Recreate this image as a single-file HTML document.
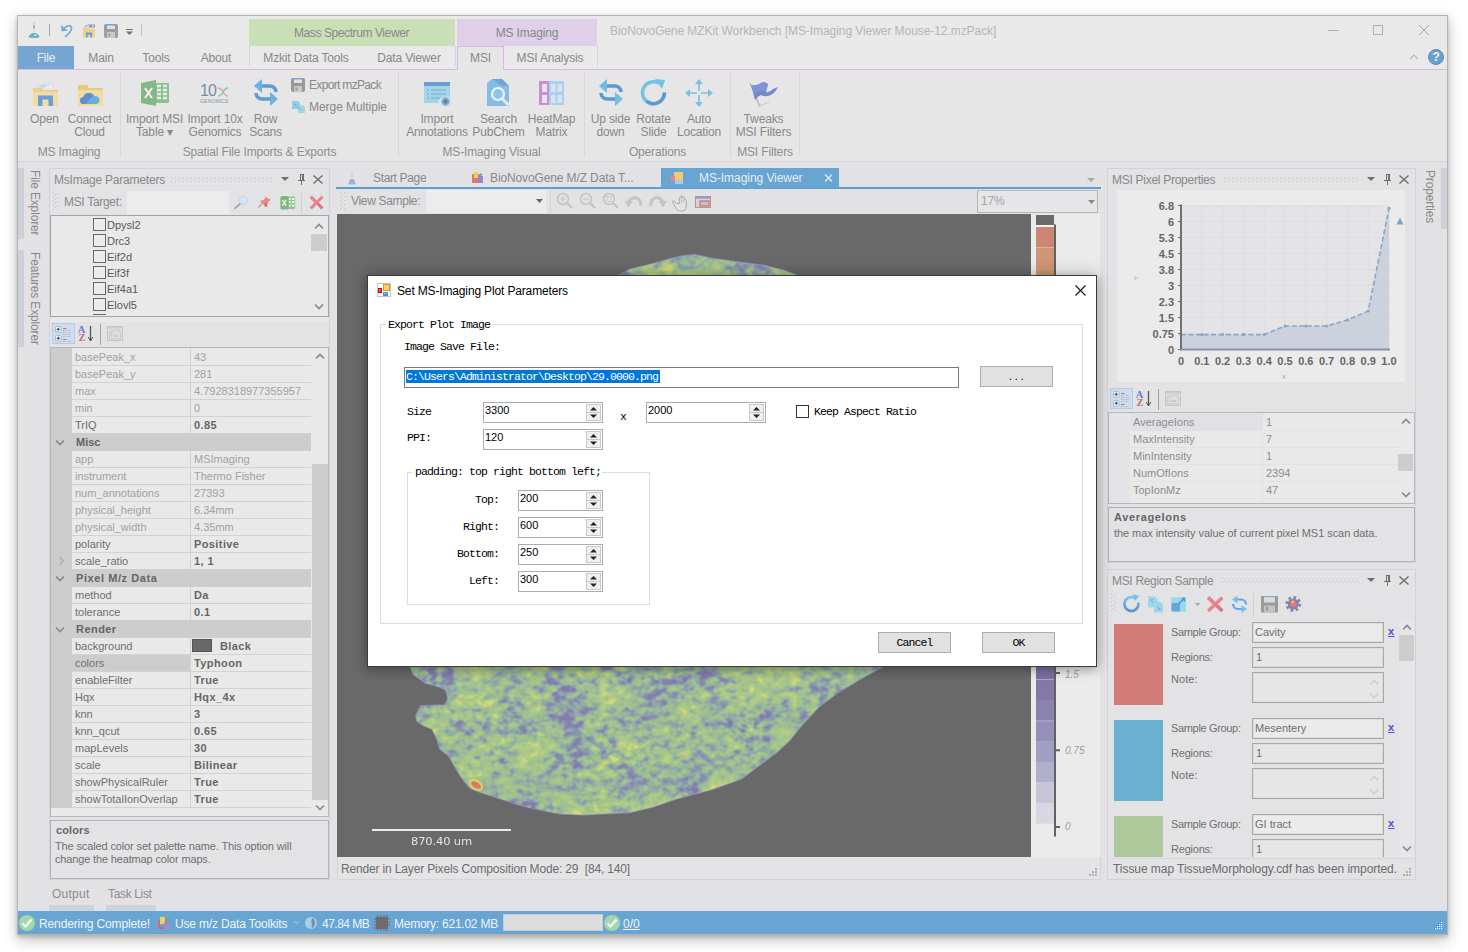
<!DOCTYPE html>
<html lang="en"><head><meta charset="utf-8"><title>BioNovoGene MZKit Workbench</title>
<style>
html,body{margin:0;padding:0;background:#fff;}
body{width:1468px;height:952px;position:relative;overflow:hidden;font-family:"Liberation Sans",sans-serif;font-size:12px;color:#7c7c7c;}
div,span,svg{position:absolute;box-sizing:border-box;}
span{white-space:nowrap;line-height:16px;height:16px;}
.t{font-size:12px;color:#888888;letter-spacing:-0.15px;}
.h{font-size:11px;color:#6f6f6f;}
.hg{font-size:11px;color:#a2a2a2;}
.hb{font-size:11px;color:#666;font-weight:bold;letter-spacing:0.4px;}
.m{font-family:"Liberation Mono",monospace;font-size:11.5px;letter-spacing:-0.9px;color:#000;margin-top:1px;}
.n{font-family:"Liberation Sans",sans-serif;font-size:11px;color:#000;}
.w{font-size:12px;color:#eef4fa;}
#win{left:17px;top:15px;width:1431px;height:920px;background:#e2e2e4;border:1px solid #b4b4b4;box-shadow:0 2px 4px rgba(0,0,0,.18),0 5px 14px rgba(0,0,0,.24);}
</style></head>
<body>
<div id="win"></div>
<div style="left:18px;top:16px;width:1429px;height:53px;background:#e9e9e9;"></div>
<div style="left:18px;top:70px;width:1429px;height:91px;background:#e6e6e6;"></div>
<div style="left:18px;top:69px;width:1429px;height:1px;background:#dcb6e8;"></div>
<div style="left:18px;top:161px;width:1429px;height:1px;background:#d6d6d8;"></div>
<div style="left:249px;top:19px;width:206px;height:27px;background:#c9e0b6;"></div>
<div style="left:457px;top:19px;width:140px;height:27px;background:#dfcfe9;"></div>
<span class="t" style="left:294px;top:25px;letter-spacing:-0.408px;">Mass Spectrum Viewer</span>
<span class="t" style="left:457px;top:25px;width:140px;text-align:center;">MS Imaging</span>
<div style="left:249px;top:46px;width:1px;height:20px;background:#d4d4d4;"></div>
<div style="left:455px;top:46px;width:1px;height:20px;background:#d4d4d4;"></div>
<div style="left:597px;top:46px;width:1px;height:20px;background:#d4d4d4;"></div>
<div style="left:18px;top:46px;width:56px;height:23px;background:#74a6d1;"></div>
<span class="t" style="left:18px;top:50px;width:56px;text-align:center;color:#e8f0f8;">File</span>
<span class="t" style="left:74px;top:50px;width:54px;text-align:center;">Main</span>
<span class="t" style="left:129px;top:50px;width:54px;text-align:center;">Tools</span>
<span class="t" style="left:185px;top:50px;width:62px;text-align:center;">About</span>
<span class="t" style="left:251px;top:50px;width:110px;text-align:center;">Mzkit Data Tools</span>
<span class="t" style="left:364px;top:50px;width:90px;text-align:center;">Data Viewer</span>
<span class="t" style="left:505px;top:50px;width:90px;text-align:center;">MSI Analysis</span>
<div style="left:457px;top:46px;width:47px;height:24px;background:#e6e6e6;border:1px solid #dcb6e8;border-bottom:none;"></div>
<span class="t" style="left:457px;top:50px;width:47px;text-align:center;">MSI</span>
<span class="t" style="left:610px;top:23px;color:#b6b6b6;letter-spacing:-0.065px;">BioNovoGene MZKit Workbench [MS-Imaging Viewer Mouse-12.mzPack]</span>
<div style="left:1328px;top:30px;width:11px;height:1px;background:#b0b0b0;"></div>
<div style="left:1373px;top:25px;width:10px;height:10px;border:1px solid #b0b0b0;"></div>
<svg style="left:1418px;top:24px" width="12" height="12" viewBox="0 0 12 12"><path d="M1 1L11 11M11 1L1 11" stroke="#a8a8a8" stroke-width="1" fill="none"/></svg>
<svg style="left:1409px;top:53px" width="10" height="7" viewBox="0 0 10 7"><path d="M1 6L5 2L9 6" stroke="#b8b8b8" stroke-width="1.2" fill="none"/></svg>
<div style="left:1428px;top:49px;width:16px;height:16px;border-radius:8px;background:#6a9fd0;border:1px solid #5c8cba;"></div>
<span class="t" style="left:1428px;top:49px;width:16px;text-align:center;color:#f0f4fa;font-weight:bold;font-size:12px;">?</span>
<svg style="left:18px;top:16px" width="130" height="26" viewBox="0 0 130 26"><path d="M16 6v10" stroke="#c8c8d0" stroke-width="1"/><path d="M16 9.500v2.500" stroke="#6a7a90" stroke-width="1"/><path d="M14 17h4l3.500 3q0 2-2.500 2h-6q-2.500 0-2.500-2z" fill="#6cb6bc"/><rect x="16.500" y="18.500" width="1.500" height="1.500" fill="#eef"/><path d="M31.500 8v12" stroke="#a8a8a8" stroke-width="1"/><path d="M43 9l0.500 6.500l6.500-1z" fill="#79add8"/><path d="M46 12q7-5 7.500 0.500q0 3-6.500 8.500" stroke="#79add8" stroke-width="1.800" fill="none"/><rect x="65" y="13" width="12" height="8.500" fill="#efd088"/><rect x="65" y="11" width="6" height="3" fill="#efd088"/><path d="M68 21.500v-5h6v5h-1.500v-3h-3v3z" fill="#5c9ce0"/><rect x="71" y="8.500" width="6" height="3" fill="#8c94a0"/><rect x="74" y="9.300" width="2" height="1.200" fill="#e8e8e8"/><path d="M67 10.500q2-2 5-1" stroke="#8cc0e0" stroke-width="1.500" fill="none"/><rect x="86" y="8" width="14" height="14" rx="2" fill="#9c9c9c"/><rect x="89" y="8" width="8" height="5" fill="#dce0e8"/><rect x="89" y="8" width="8" height="1.500" fill="#6ca4dc"/><rect x="89" y="16" width="8" height="6" fill="#c8c8c8"/><rect x="90.500" y="17.500" width="1.500" height="3" fill="#9c9c9c"/><path d="M108 13.500h7" stroke="#707070" stroke-width="1"/><path d="M108 15.500h7l-3.500 3.500z" fill="#707070"/><path d="M123.500 8v12" stroke="#c0c0c0" stroke-width="1"/></svg>
<div style="left:120px;top:72px;width:1px;height:85px;background:#d8d8d8;"></div>
<div style="left:398px;top:72px;width:1px;height:85px;background:#d8d8d8;"></div>
<div style="left:584px;top:72px;width:1px;height:85px;background:#d8d8d8;"></div>
<div style="left:730px;top:72px;width:1px;height:85px;background:#d8d8d8;"></div>
<div style="left:799px;top:72px;width:1px;height:85px;background:#d8d8d8;"></div>
<span class="t" style="left:18px;top:144px;width:102px;text-align:center;color:#8e8e8e;">MS Imaging</span>
<span class="t" style="left:121px;top:144px;width:277px;text-align:center;color:#8e8e8e;">Spatial File Imports &amp; Exports</span>
<span class="t" style="left:399px;top:144px;width:185px;text-align:center;color:#8e8e8e;">MS-Imaging Visual</span>
<span class="t" style="left:585px;top:144px;width:145px;text-align:center;color:#8e8e8e;">Operations</span>
<span class="t" style="left:731px;top:144px;width:68px;text-align:center;color:#8e8e8e;">MSI Filters</span>
<span class="t" style="left:-15.5px;top:111px;width:120px;text-align:center;">Open</span>
<span class="t" style="left:29.5px;top:111px;width:120px;text-align:center;">Connect</span>
<span class="t" style="left:29.5px;top:124px;width:120px;text-align:center;">Cloud</span>
<span class="t" style="left:94.5px;top:111px;width:120px;text-align:center;">Import MSI</span>
<span class="t" style="left:94.5px;top:124px;width:120px;text-align:center;">Table &#9662;</span>
<span class="t" style="left:155px;top:111px;width:120px;text-align:center;">Import 10x</span>
<span class="t" style="left:155px;top:124px;width:120px;text-align:center;">Genomics</span>
<span class="t" style="left:205.5px;top:111px;width:120px;text-align:center;">Row</span>
<span class="t" style="left:205.5px;top:124px;width:120px;text-align:center;">Scans</span>
<span class="t" style="left:377px;top:111px;width:120px;text-align:center;">Import</span>
<span class="t" style="left:377px;top:124px;width:120px;text-align:center;">Annotations</span>
<span class="t" style="left:438.5px;top:111px;width:120px;text-align:center;">Search</span>
<span class="t" style="left:438.5px;top:124px;width:120px;text-align:center;">PubChem</span>
<span class="t" style="left:491.5px;top:111px;width:120px;text-align:center;">HeatMap</span>
<span class="t" style="left:491.5px;top:124px;width:120px;text-align:center;">Matrix</span>
<span class="t" style="left:550.5px;top:111px;width:120px;text-align:center;">Up side</span>
<span class="t" style="left:550.5px;top:124px;width:120px;text-align:center;">down</span>
<span class="t" style="left:593.5px;top:111px;width:120px;text-align:center;">Rotate</span>
<span class="t" style="left:593.5px;top:124px;width:120px;text-align:center;">Slide</span>
<span class="t" style="left:639px;top:111px;width:120px;text-align:center;">Auto</span>
<span class="t" style="left:639px;top:124px;width:120px;text-align:center;">Location</span>
<span class="t" style="left:703.5px;top:111px;width:120px;text-align:center;">Tweaks</span>
<span class="t" style="left:703.5px;top:124px;width:120px;text-align:center;">MSI Filters</span>
<span class="t" style="left:309px;top:77px;letter-spacing:-0.669px;">Export mzPack</span>
<span class="t" style="left:309px;top:99px;letter-spacing:-0.05px;">Merge Multiple</span>
<svg style="left:32px;top:80px" width="28" height="27" viewBox="0 0 28 27"><path d="M4 8l11-5.500l1.500 4.500M9 7l11-4l2 6" fill="#e6edf5" stroke="#cfd8e4" stroke-width="0.800"/><path d="M7 6.500l6-2.500M9 8l6-2.500" stroke="#a8c0dc" stroke-width="0.800"/><path d="M1 8h9l2 2h14v15q0 1-1 1h-23q-1 0-1-1z" fill="#edd08e"/><path d="M1 12h25v13q0 1-1 1h-23q-1 0-1-1z" fill="#f2dca6"/><path d="M6 26v-10.500h15v10.500h-4.500v-6.500h-6v6.500z" fill="#6a9fd8"/></svg>
<svg style="left:77px;top:83px" width="28" height="24" viewBox="0 0 28 24"><path d="M1 2h9l2 3h14v17q0 1-1 1h-23q-1 0-1-1z" fill="#e8c880"/><path d="M1 7h25v15q0 1-1 1h-23q-1 0-1-1z" fill="#f2dca4"/><path d="M7 21q-4 0-4-3.500q0-3 3.500-3.500q1-4 5.500-4q4 0 5.500 3q5 0 5 4q0 4-4 4z" fill="#6aaee0"/><path d="M7 21q-4 0-4-3.500q0-3 3.500-3.500q1-4 5.500-4q3 0 4.500 2l-8 9z" fill="#5c90cc"/></svg>
<svg style="left:140px;top:79px" width="30" height="28" viewBox="0 0 30 28"><rect x="13" y="4" width="16" height="20" rx="1" fill="#8cc090"/><path d="M17 7h4M23 7h4M17 11h4M23 11h4M17 15h4M23 15h4M17 19h4M23 19h4" stroke="#e4f0e4" stroke-width="2.500"/><path d="M1 4l15-3v26l-15-3z" fill="#84b888"/><path d="M5 9l7 10M12 9l-7 10" stroke="#f0f6f0" stroke-width="2" fill="none"/></svg>
<svg style="left:199px;top:82px" width="32" height="22" viewBox="0 0 32 22"><text x="1" y="14" font-family="Liberation Sans,sans-serif" font-size="16" fill="#7c8ca4" textLength="17">10</text><path d="M19 6q3 0 5 4t5 4" stroke="#e8a488" stroke-width="1.500" fill="none"/><path d="M19 14q3 0 5-4t5-4" stroke="#88c8b8" stroke-width="1.500" fill="none"/><text x="1" y="20.500" font-family="Liberation Sans,sans-serif" font-size="5" fill="#8090a8" textLength="28">GENOMICS</text></svg>
<svg style="left:253px;top:78px" width="26" height="29" viewBox="0 0 26 29"><path d="M7 8h10a6 6 0 0 1 6 6" stroke="#5c9cd4" stroke-width="3.500" fill="none"/><path d="M9 1v14l-8-7z" fill="#6ab0e0"/><path d="M19 21h-10a6 6 0 0 1 -6-6" stroke="#5c9cd4" stroke-width="3.500" fill="none"/><path d="M17 14v14l8-7z" fill="#6ab0e0"/></svg>
<svg style="left:291px;top:78px" width="14" height="14" viewBox="0 0 14 14"><rect x="0" y="0" width="14" height="14" rx="2" fill="#989898"/><rect x="3" y="0" width="8" height="5" fill="#dce0e8"/><rect x="3" y="0" width="8" height="1.500" fill="#7ca8d8"/><rect x="3" y="8" width="8" height="6" fill="#c8c8c8"/><rect x="4.500" y="9.500" width="2" height="3" fill="#989898"/></svg>
<svg style="left:291px;top:100px" width="15" height="14" viewBox="0 0 15 14"><path d="M1 1h6l2 2v6h-8z" fill="#88d0e4"/><path d="M7 5h5l2 2v6h-7z" fill="#98d8e8"/><path d="M4 4l6 6" stroke="#e070c0" stroke-width="1.200" stroke-dasharray="2 1.500"/></svg>
<svg style="left:423px;top:81px" width="31" height="28" viewBox="0 0 31 28"><rect x="1" y="1" width="26" height="21" fill="#a4d4e8"/><rect x="1" y="1" width="26" height="4" fill="#6c9cd4"/><path d="M4 9h2M8 9h15M4 13h2M8 13h15M4 17h2M8 17h10" stroke="#7cbcd8" stroke-width="1.500"/><ellipse cx="22.500" cy="21" rx="7" ry="5.500" fill="#dfe4e8"/><circle cx="22.500" cy="20.500" r="4.200" fill="#7ab4e0"/><circle cx="22.500" cy="20.500" r="2.200" fill="#7a7a80"/></svg>
<svg style="left:486px;top:78px" width="26" height="30" viewBox="0 0 26 30"><path d="M1 5l5-4h10l7 7v20h-22z" fill="#84bce6"/><path d="M6 1h10l7 7h-7z" fill="#6ea6d8"/><circle cx="12" cy="16" r="6" fill="#8cc4ea" stroke="#f0f4f8" stroke-width="2.200"/><path d="M16.500 21l6 6" stroke="#e8ecf0" stroke-width="3"/></svg>
<svg style="left:539px;top:81px" width="26" height="25" viewBox="0 0 26 25"><rect x="0" y="0" width="10" height="24" fill="#c98fd0"/><rect x="10" y="0" width="15" height="24" fill="#aed0ee"/><rect x="3" y="3" width="5" height="8" fill="#e6e6e6"/><rect x="3" y="14" width="5" height="8" fill="#e6e6e6"/><rect x="12" y="3" width="4.500" height="8" fill="#d4e4f2"/><rect x="12" y="14" width="4.500" height="8" fill="#d4e4f2"/><rect x="18.500" y="3" width="4.500" height="8" fill="#d4e4f2"/><rect x="18.500" y="14" width="4.500" height="8" fill="#d4e4f2"/></svg>
<svg style="left:598px;top:78px" width="26" height="29" viewBox="0 0 26 29"><path d="M7 8h10a6 6 0 0 1 6 6" stroke="#5e98d4" stroke-width="3.500" fill="none"/><path d="M9 1v14l-8-7z" fill="#72bce4"/><path d="M19 21h-10a6 6 0 0 1 -6-6" stroke="#5e98d4" stroke-width="3.500" fill="none"/><path d="M17 14v14l8-7z" fill="#72bce4"/></svg>
<svg style="left:640px;top:78px" width="28" height="29" viewBox="0 0 28 29"><path d="M24.500 14.500a11 11 0 1 1 -6-9.500" stroke="#78c0e4" stroke-width="3.500" fill="none"/><path d="M24.500 14.500a11 11 0 0 1 -18 8.500" stroke="#5c98d4" stroke-width="3.500" fill="none"/><path d="M15 1l10 1l-3 9z" fill="#78c0e4"/></svg>
<svg style="left:684px;top:78px" width="30" height="30" viewBox="0 0 30 30"><path d="M15 5v8M15 17v8M5 15h8M17 15h8" stroke="#78c0e4" stroke-width="1.600"/><path d="M15 1l4 5h-8zM15 29l4-5h-8zM1 15l5-4v8zM29 15l-5-4v8z" fill="#78c0e4"/></svg>
<svg style="left:748px;top:80px" width="32" height="28" viewBox="0 0 32 28"><path d="M2 3l10 24" stroke="#b4b4b8" stroke-width="1.200"/><path d="M11 26l10-4" stroke="#c8c8cc" stroke-width="1"/><path d="M3 5q6 1 10-2q3-2 7 1l-2 8q3 1 7-3l5-2q-4 8-10 9q-4 1-7-1q-3 1-6 5z" fill="#7488cc"/><path d="M3 5q6 1 10-2q3-2 7 1l-2 8q-5-3-9 0q-2 1-3 2z" fill="#8094d4"/></svg>
<div style="left:18px;top:168px;width:6px;height:71px;background:#d0d0d9;"></div>
<div style="left:18px;top:250px;width:6px;height:97px;background:#d0d0d9;"></div>
<span class="t" style="left:27px;top:170px;transform-origin:0 0;transform:rotate(90deg) translate(0,-16px);">File Explorer</span>
<span class="t" style="left:27px;top:252px;transform-origin:0 0;transform:rotate(90deg) translate(0,-16px);">Features Explorer</span>
<div style="left:49px;top:168px;width:281px;height:712px;background:#e3e3e5;border:1px solid #d2d2dc;"></div>
<span class="t" style="left:54px;top:172px;letter-spacing:-0.206px;">MsImage Parameters</span>
<svg style="left:171px;top:177px" width="102" height="5"><defs><pattern id="gp171" width="4" height="4" patternUnits="userSpaceOnUse"><rect x="0" y="0" width="1" height="1" fill="#c2c2c6"/><rect x="2" y="2" width="1" height="1" fill="#c2c2c6"/></pattern></defs><rect width="102" height="5" fill="url(#gp171)"/></svg>
<svg style="left:279px;top:171px" width="48" height="16" viewBox="0 0 48 16"><path d="M2 6h8l-4 4z" fill="#6e6e6e"/><path d="M21.500 3v6M21 3.500h4M19 9.500h7M22.500 10v4" stroke="#6e6e6e" stroke-width="1" fill="none"/><path d="M24 3v6.500" stroke="#6e6e6e" stroke-width="2"/><path d="M34.500 4.500l9 8M43.500 4.500l-9 8" stroke="#6e6e6e" stroke-width="1.400" fill="none"/></svg>
<svg style="left:53px;top:193px" width="5" height="18"><defs><pattern id="vg53" width="4" height="4" patternUnits="userSpaceOnUse"><rect x="0" y="0" width="1" height="1" fill="#c2c2c6"/><rect x="2" y="2" width="1" height="1" fill="#c2c2c6"/></pattern></defs><rect width="5" height="18" fill="url(#vg53)"/></svg>
<span class="t" style="left:64px;top:194px;letter-spacing:-0.313px;">MSI Target:</span>
<div style="left:127px;top:191px;width:102px;height:23px;background:#ececec;"></div>
<svg style="left:230px;top:191px" width="100" height="24" viewBox="0 0 100 24"><path d="M10.500 12.300L4.500 17.700" stroke="#96a0aa" stroke-width="1.600"/><circle cx="13.600" cy="9.200" r="4.300" fill="#d6e4f2" stroke="#c2ceda" stroke-width="0.800"/><path d="M32.200 12.300L28.400 16.600" stroke="#a8a8ac" stroke-width="1.300"/><path d="M34 5.200l6.600 3.200l-1.400 2.200l-1.200-0.200l-1.600 3.400l0.600 1.400l-1.200 0.800l-5.600-5.600l1-1.200l1.400 0.400l2.800-2.400l-0.400-1.200z" fill="#e48c84"/><path d="M38.600 10.400l-1.600 3.400l0.600 1.400l-1.200 0.800l-2.600-2.600z" fill="#d0766e"/><rect x="56" y="5.500" width="9.200" height="12.500" rx="1" fill="#92c692"/><path d="M58.800 8h2M62 8h2.400M58.800 11h2M62 11h2.400M58.800 14.500h2M62 14.500h2.400" stroke="#eef6ee" stroke-width="2"/><rect x="50.400" y="5" width="8" height="13.600" rx="1.500" fill="#7eb67e"/><path d="M52.400 9.200l3.800 5.400M56.200 9.200l-3.800 5.400" stroke="#f4faf4" stroke-width="1.300"/><path d="M71.500 1.500v21" stroke="#d0d0d6" stroke-width="1"/><path d="M80.800 5.800L92.400 17.400" stroke="#dc7684" stroke-width="3"/><path d="M92.400 5.800L80.800 17.400" stroke="#e8848e" stroke-width="3"/><path d="M80.800 5.800L86.600 11.600" stroke="#e8848e" stroke-width="3"/></svg>
<div style="left:50px;top:215px;width:279px;height:102px;background:#e9e9e9;border:1px solid #a4a4a8;overflow:hidden;"></div>
<div style="left:93px;top:218px;width:13px;height:13px;border:1px solid #6a6a6a;background:#ececec;"></div>
<span class="h" style="left:107px;top:217px;color:#5a5a5a;">Dpysl2</span>
<div style="left:93px;top:234px;width:13px;height:13px;border:1px solid #6a6a6a;background:#ececec;"></div>
<span class="h" style="left:107px;top:233px;color:#5a5a5a;">Drc3</span>
<div style="left:93px;top:250px;width:13px;height:13px;border:1px solid #6a6a6a;background:#ececec;"></div>
<span class="h" style="left:107px;top:249px;color:#5a5a5a;">Eif2d</span>
<div style="left:93px;top:266px;width:13px;height:13px;border:1px solid #6a6a6a;background:#ececec;"></div>
<span class="h" style="left:107px;top:265px;color:#5a5a5a;">Eif3f</span>
<div style="left:93px;top:282px;width:13px;height:13px;border:1px solid #6a6a6a;background:#ececec;"></div>
<span class="h" style="left:107px;top:281px;color:#5a5a5a;">Eif4a1</span>
<div style="left:93px;top:298px;width:13px;height:13px;border:1px solid #6a6a6a;background:#ececec;"></div>
<span class="h" style="left:107px;top:297px;color:#5a5a5a;">Elovl5</span>
<div style="left:93px;top:314px;width:13px;height:1px;background:#6a6a6a;"></div>
<div style="left:311px;top:216px;width:17px;height:100px;background:#e9e9e9;"></div>
<div style="left:311px;top:234px;width:16px;height:17px;background:#cdcdcd;"></div>
<svg style="left:314px;top:223px" width="10" height="7" viewBox="0 0 10 7"><path d="M1 5.500L5 1.500L9 5.500" stroke="#8a8a8a" stroke-width="1.700" fill="none"/></svg>
<svg style="left:314px;top:303px" width="10" height="7" viewBox="0 0 10 7"><path d="M1 1.500L5 5.500L9 1.500" stroke="#8a8a8a" stroke-width="1.700" fill="none"/></svg>
<div style="left:50px;top:317px;width:279px;height:5px;background:#e8e8e8;"></div>
<div style="left:50px;top:322px;width:279px;height:25px;background:#e3e3e4;"></div>
<div style="left:52px;top:323px;width:23px;height:21px;background:#cedceb;border:1px solid #b2cde9;"></div>
<svg style="left:52px;top:322px" width="74" height="24" viewBox="0 0 74 24"><rect x="3.500" y="4.5" width="5.500" height="5.500" rx="0.800" fill="#f6f6f6" stroke="#9cbce0" stroke-width="1"/><path d="M4.700 7.25h3.100M6.250 5.7v3.100" stroke="#3c3c3c" stroke-width="1"/><rect x="3.500" y="13.5" width="5.500" height="5.500" rx="0.800" fill="#f6f6f6" stroke="#9cbce0" stroke-width="1"/><path d="M4.700 16.25h3.100M6.250 14.7v3.100" stroke="#3c3c3c" stroke-width="1"/><path d="M11 6.500h3.500M11 17.500h3.500" stroke="#8c8c8c" stroke-width="1"/><path d="M11 8.5h3.500M16 8.5h3" stroke="#aab0bc" stroke-width="1" stroke-dasharray="1 0.500"/><path d="M11 10.5h3.500M16 10.5h3" stroke="#aab0bc" stroke-width="1" stroke-dasharray="1 0.500"/><path d="M11 12.5h3.500M16 12.5h3" stroke="#aab0bc" stroke-width="1" stroke-dasharray="1 0.500"/><path d="M11 14.5h3.500M16 14.5h3" stroke="#aab0bc" stroke-width="1" stroke-dasharray="1 0.500"/><path d="M11 19.5h3.500M16 19.5h3" stroke="#aab0bc" stroke-width="1" stroke-dasharray="1 0.500"/><text x="25.800" y="10.800" font-family="Liberation Serif,serif" font-size="10.500" font-weight="bold" fill="#6c7ad2">A</text><text x="26.500" y="19.200" font-family="Liberation Serif,serif" font-size="10.500" font-weight="bold" fill="#c8687a">Z</text><path d="M38.500 4v15" stroke="#555" stroke-width="1.300"/><path d="M36.300 15l2.200 4l2.200-4" stroke="#555" stroke-width="1" fill="none"/><path d="M48.500 2v21" stroke="#a2a2a2" stroke-width="1"/><rect x="55.500" y="4.500" width="15" height="14" fill="#dedede" stroke="#c6c6c6" stroke-width="1"/><rect x="56" y="5" width="14" height="1.500" fill="#cecece"/><path d="M57.500 9.500h4v-1.500h6v2M57.500 9.500v7.500h11v-7" stroke="#cacaca" stroke-width="1" fill="none"/><path d="M59 11.500h1M59 14h1M61.500 14h4" stroke="#b4b4b4" stroke-width="1"/></svg>
<div style="left:50px;top:347px;width:279px;height:470px;background:#e9e9e9;border:1px solid #b8b8bc;"></div>
<div style="left:51px;top:348px;width:21px;height:460px;background:#cdcdcd;"></div>
<div style="left:190px;top:348px;width:1px;height:460px;background:#d2d2d2;"></div>
<div style="left:72px;top:365px;width:239px;height:1px;background:#d2d2d2;"></div>
<span class="hg" style="left:75px;top:349px;">basePeak_x</span>
<span class="hg" style="left:194px;top:349px;">43</span>
<div style="left:72px;top:382px;width:239px;height:1px;background:#d2d2d2;"></div>
<span class="hg" style="left:75px;top:366px;">basePeak_y</span>
<span class="hg" style="left:194px;top:366px;">281</span>
<div style="left:72px;top:399px;width:239px;height:1px;background:#d2d2d2;"></div>
<span class="hg" style="left:75px;top:383px;">max</span>
<span class="hg" style="left:194px;top:383px;">4.7928318977355957</span>
<div style="left:72px;top:416px;width:239px;height:1px;background:#d2d2d2;"></div>
<span class="hg" style="left:75px;top:400px;">min</span>
<span class="hg" style="left:194px;top:400px;">0</span>
<div style="left:72px;top:433px;width:239px;height:1px;background:#d2d2d2;"></div>
<span class="h" style="left:75px;top:417px;">TrIQ</span>
<span class="hb" style="left:194px;top:417px;">0.85</span>
<div style="left:51px;top:433px;width:260px;height:18px;background:#cdcdcd;"></div>
<span class="hb" style="left:76px;top:434px;color:#646464;letter-spacing:0.008px;">Misc</span>
<svg style="left:55px;top:439px" width="10" height="7" viewBox="0 0 10 7"><path d="M1 1.500L5 5.500L9 1.500" stroke="#8a8a8a" stroke-width="1.700" fill="none"/></svg>
<div style="left:72px;top:467px;width:239px;height:1px;background:#d2d2d2;"></div>
<span class="hg" style="left:75px;top:451px;">app</span>
<span class="hg" style="left:194px;top:451px;">MSImaging</span>
<div style="left:72px;top:484px;width:239px;height:1px;background:#d2d2d2;"></div>
<span class="hg" style="left:75px;top:468px;">instrument</span>
<span class="hg" style="left:194px;top:468px;">Thermo Fisher</span>
<div style="left:72px;top:501px;width:239px;height:1px;background:#d2d2d2;"></div>
<span class="hg" style="left:75px;top:485px;">num_annotations</span>
<span class="hg" style="left:194px;top:485px;">27393</span>
<div style="left:72px;top:518px;width:239px;height:1px;background:#d2d2d2;"></div>
<span class="hg" style="left:75px;top:502px;">physical_height</span>
<span class="hg" style="left:194px;top:502px;">6.34mm</span>
<div style="left:72px;top:535px;width:239px;height:1px;background:#d2d2d2;"></div>
<span class="hg" style="left:75px;top:519px;">physical_width</span>
<span class="hg" style="left:194px;top:519px;">4.35mm</span>
<div style="left:72px;top:552px;width:239px;height:1px;background:#d2d2d2;"></div>
<span class="h" style="left:75px;top:536px;">polarity</span>
<span class="hb" style="left:194px;top:536px;">Positive</span>
<div style="left:72px;top:569px;width:239px;height:1px;background:#d2d2d2;"></div>
<span class="h" style="left:75px;top:553px;">scale_ratio</span>
<span class="hb" style="left:194px;top:553px;">1, 1</span>
<svg style="left:58px;top:556px" width="7" height="10" viewBox="0 0 7 10"><path d="M1.500 1L5.500 5L1.500 9" stroke="#b0b0b0" stroke-width="1.500" fill="none"/></svg>
<div style="left:51px;top:569px;width:260px;height:18px;background:#cdcdcd;"></div>
<span class="hb" style="left:76px;top:570px;color:#646464;letter-spacing:0.574px;">Pixel M/z Data</span>
<svg style="left:55px;top:575px" width="10" height="7" viewBox="0 0 10 7"><path d="M1 1.500L5 5.500L9 1.500" stroke="#8a8a8a" stroke-width="1.700" fill="none"/></svg>
<div style="left:72px;top:603px;width:239px;height:1px;background:#d2d2d2;"></div>
<span class="h" style="left:75px;top:587px;">method</span>
<span class="hb" style="left:194px;top:587px;">Da</span>
<div style="left:72px;top:620px;width:239px;height:1px;background:#d2d2d2;"></div>
<span class="h" style="left:75px;top:604px;">tolerance</span>
<span class="hb" style="left:194px;top:604px;">0.1</span>
<div style="left:51px;top:620px;width:260px;height:18px;background:#cdcdcd;"></div>
<span class="hb" style="left:76px;top:621px;color:#646464;letter-spacing:0.449px;">Render</span>
<svg style="left:55px;top:626px" width="10" height="7" viewBox="0 0 10 7"><path d="M1 1.500L5 5.500L9 1.500" stroke="#8a8a8a" stroke-width="1.700" fill="none"/></svg>
<div style="left:72px;top:654px;width:239px;height:1px;background:#d2d2d2;"></div>
<span class="h" style="left:75px;top:638px;">background</span>
<div style="left:192px;top:639px;width:20px;height:13px;background:#686868;border:1px solid #555;"></div>
<span class="hb" style="left:220px;top:638px;">Black</span>
<div style="left:72px;top:671px;width:239px;height:1px;background:#d2d2d2;"></div>
<div style="left:72px;top:655px;width:118px;height:16px;background:#cdcdcd;"></div>
<span class="h" style="left:75px;top:655px;">colors</span>
<span class="hb" style="left:194px;top:655px;">Typhoon</span>
<div style="left:72px;top:688px;width:239px;height:1px;background:#d2d2d2;"></div>
<span class="h" style="left:75px;top:672px;">enableFilter</span>
<span class="hb" style="left:194px;top:672px;">True</span>
<div style="left:72px;top:705px;width:239px;height:1px;background:#d2d2d2;"></div>
<span class="h" style="left:75px;top:689px;">Hqx</span>
<span class="hb" style="left:194px;top:689px;">Hqx_4x</span>
<div style="left:72px;top:722px;width:239px;height:1px;background:#d2d2d2;"></div>
<span class="h" style="left:75px;top:706px;">knn</span>
<span class="hb" style="left:194px;top:706px;">3</span>
<div style="left:72px;top:739px;width:239px;height:1px;background:#d2d2d2;"></div>
<span class="h" style="left:75px;top:723px;">knn_qcut</span>
<span class="hb" style="left:194px;top:723px;">0.65</span>
<div style="left:72px;top:756px;width:239px;height:1px;background:#d2d2d2;"></div>
<span class="h" style="left:75px;top:740px;">mapLevels</span>
<span class="hb" style="left:194px;top:740px;">30</span>
<div style="left:72px;top:773px;width:239px;height:1px;background:#d2d2d2;"></div>
<span class="h" style="left:75px;top:757px;">scale</span>
<span class="hb" style="left:194px;top:757px;">Bilinear</span>
<div style="left:72px;top:790px;width:239px;height:1px;background:#d2d2d2;"></div>
<span class="h" style="left:75px;top:774px;">showPhysicalRuler</span>
<span class="hb" style="left:194px;top:774px;">True</span>
<div style="left:72px;top:807px;width:239px;height:1px;background:#d2d2d2;"></div>
<span class="h" style="left:75px;top:791px;">showTotalIonOverlap</span>
<span class="hb" style="left:194px;top:791px;">True</span>
<div style="left:311px;top:348px;width:17px;height:468px;background:#e9e9e9;"></div>
<div style="left:312px;top:464px;width:16px;height:336px;background:#cdcdcd;"></div>
<svg style="left:315px;top:353px" width="10" height="7" viewBox="0 0 10 7"><path d="M1 5.500L5 1.500L9 5.500" stroke="#8a8a8a" stroke-width="1.700" fill="none"/></svg>
<svg style="left:315px;top:804px" width="10" height="7" viewBox="0 0 10 7"><path d="M1 1.500L5 5.500L9 1.500" stroke="#8a8a8a" stroke-width="1.700" fill="none"/></svg>
<div style="left:50px;top:820px;width:279px;height:59px;background:#e3e3e5;border:1px solid #b4b4b8;"></div>
<span class="hb" style="left:56px;top:822px;letter-spacing:0.114px;">colors</span>
<span class="h" style="left:55px;top:838px;letter-spacing:-0.131px;">The scaled color set palette name. This option will</span>
<span class="h" style="left:55px;top:851px;letter-spacing:-0.154px;">change the heatmap color maps.</span>
<span class="t" style="left:52px;top:886px;color:#8c8c8c;letter-spacing:0.245px;">Output</span>
<span class="t" style="left:108px;top:886px;color:#8c8c8c;letter-spacing:-0.343px;">Task List</span>
<div style="left:49px;top:905px;width:45px;height:6px;background:#d2d2da;"></div>
<div style="left:106px;top:905px;width:50px;height:6px;background:#d2d2da;"></div>
<div style="left:336px;top:187px;width:765px;height:2px;background:#5f9fd0;"></div>
<div style="left:661px;top:168px;width:178px;height:20px;background:#68a5d2;"></div>
<span class="t" style="left:373px;top:170px;letter-spacing:-0.35px;">Start Page</span>
<span class="t" style="left:490px;top:170px;letter-spacing:-0.121px;">BioNovoGene M/Z Data T...</span>
<span class="t" style="left:699px;top:170px;color:#e6eef6;letter-spacing:-0.058px;">MS-Imaging Viewer</span>
<svg style="left:824px;top:173px" width="10" height="10" viewBox="0 0 10 10"><path d="M1 1.500l7 7M8 1.500l-7 7" stroke="#dce8f4" stroke-width="1.500" fill="none"/></svg>
<svg style="left:1086px;top:177px" width="10" height="6" viewBox="0 0 10 6"><path d="M1 1h8l-4 4z" fill="#a8a8a8"/></svg>
<svg style="left:346px;top:170px" width="12" height="16" viewBox="0 0 12 16"><path d="M6 2v6" stroke="#c8c8d4" stroke-width="1"/><path d="M4.500 9h3l2 4q0 1.500-1.500 1.500h-4q-1.500 0-1.500-1.500z" fill="#8cb8dc"/></svg>
<svg style="left:471px;top:171px" width="14" height="14" viewBox="0 0 14 14"><rect x="1" y="3" width="8" height="9" rx="1" fill="#d87878"/><rect x="3" y="1" width="4" height="6" fill="#e8d060"/><rect x="7" y="5" width="5" height="7" fill="#a080c8"/><path d="M9 2l3 2l-3 1z" fill="#58b060"/></svg>
<svg style="left:670px;top:171px" width="14" height="14" viewBox="0 0 14 14"><rect x="4" y="1" width="9" height="8" fill="#f0cc70"/><rect x="1" y="5" width="4" height="5" fill="#e08888"/><rect x="5" y="9" width="8" height="4" fill="#a8c8e8"/></svg>
<div style="left:337px;top:189px;width:764px;height:25px;background:#e2e2e4;"></div>
<svg style="left:340px;top:192px" width="5" height="18"><defs><pattern id="vg340" width="4" height="4" patternUnits="userSpaceOnUse"><rect x="0" y="0" width="1" height="1" fill="#c2c2c6"/><rect x="2" y="2" width="1" height="1" fill="#c2c2c6"/></pattern></defs><rect width="5" height="18" fill="url(#vg340)"/></svg>
<span class="t" style="left:351px;top:193px;letter-spacing:-0.33px;">View Sample:</span>
<div style="left:426px;top:190px;width:120px;height:23px;background:#ececec;"></div>
<svg style="left:536px;top:199px" width="8" height="5" viewBox="0 0 8 5"><path d="M0 0h7l-3.500 4z" fill="#666"/></svg>
<div style="left:550px;top:191px;width:1px;height:22px;background:#d4d4d6;"></div>
<svg style="left:553px;top:190px" width="170" height="24" viewBox="0 0 170 24"><circle cx="10" cy="9" r="5.500" fill="none" stroke="#c4c4c4" stroke-width="1.500"/><path d="M14 13l5 5" stroke="#c4c4c4" stroke-width="2.200"/><path d="M7 9h6M10 6v6" stroke="#c4c4c4" stroke-width="1"/><circle cx="33" cy="9" r="5.500" fill="none" stroke="#c4c4c4" stroke-width="1.500"/><path d="M37 13l5 5" stroke="#c4c4c4" stroke-width="2.200"/><path d="M30 9h6" stroke="#c4c4c4" stroke-width="1"/><circle cx="56" cy="9" r="5.500" fill="none" stroke="#c4c4c4" stroke-width="1.500"/><path d="M60 13l5 5" stroke="#c4c4c4" stroke-width="2.200"/><rect x="53.5" y="6.500" width="5" height="5" fill="none" stroke="#c4c4c4" stroke-width="1" stroke-dasharray="2 1"/><path d="M87.500 16A6 6 0 1 0 75.500 12" stroke="#c6c6c6" stroke-width="3.200" fill="none"/><path d="M71.500 11h8.500l-4.500 6.500z" fill="#c6c6c6"/><path d="M98 16A6 6 0 1 1 110 12" stroke="#c6c6c6" stroke-width="3.200" fill="none"/><path d="M114 11h-8.500l4.500 6.500z" fill="#c6c6c6"/><path d="M123.500 13.500l-2.500-2.500q-1.500-0.500-1.500 1l4 7q1 2 3 2h3q3 0 3.500-3l0.500-7.500q-0.800-1.500-1.800 0v-2.500q-0.900-1.500-1.800 0v-1.500q-0.900-1.500-1.800 0v1q-0.900-1.500-1.800 0v6z" fill="#e4e4e4" stroke="#a4a4a4" stroke-width="0.900"/><path d="M126.600 9v4M128.400 8v5M130.200 9.500v4" stroke="#b4b4b4" stroke-width="0.700"/><rect x="142.500" y="6.500" width="15" height="11" fill="#c4d8ec" stroke="#c89474" stroke-width="1"/><rect x="143" y="7" width="14" height="1.500" fill="#7c9cc8"/><rect x="147" y="11" width="9" height="5" fill="#b8c4d0" stroke="#e06464" stroke-width="1.200"/></svg>
<div style="left:977px;top:190px;width:121px;height:23px;background:#e6e6e8;border:1px solid #b6b6b8;"></div>
<span class="t" style="left:981px;top:193px;color:#a4a4a4;">17%</span>
<svg style="left:1088px;top:200px" width="7" height="4" viewBox="0 0 7 4"><path d="M0 0h7l-3.500 4z" fill="#8a8a8a"/></svg>
<div style="left:337px;top:214px;width:694px;height:643px;background:#696969;"></div>
<div style="left:1031px;top:214px;width:69px;height:643px;background:#ebebeb;"></div>
<svg style="left:337px;top:214px" width="694" height="643" viewBox="337 214 694 643">
<defs>
<filter id="nz" x="0" y="0" width="100%" height="100%" color-interpolation-filters="sRGB">
<feTurbulence type="fractalNoise" baseFrequency="0.022 0.03" numOctaves="2" seed="5" result="n1"/>
<feTurbulence type="fractalNoise" baseFrequency="0.11 0.14" numOctaves="2" seed="11" result="n2"/>
<feComposite in="n1" in2="n2" operator="arithmetic" k1="0" k2="0.55" k3="0.6" k4="-0.075" result="n"/>
<feColorMatrix in="n" type="matrix" values="1.7 0 0 0 -0.165  1.7 0 0 0 -0.165  1.7 0 0 0 -0.165  0 0 0 0 1"/>
<feComponentTransfer>
<feFuncR type="table" tableValues="0.52 0.52 0.53 0.57 0.62 0.66 0.72 0.84"/>
<feFuncG type="table" tableValues="0.48 0.49 0.57 0.67 0.75 0.78 0.81 0.85"/>
<feFuncB type="table" tableValues="0.67 0.67 0.69 0.65 0.57 0.54 0.52 0.47"/>
</feComponentTransfer>
<feComposite in2="SourceGraphic" operator="in"/>
</filter>
</defs>
<path fill="#8088b0" stroke="#8a8cb4" stroke-width="1.600" stroke-linejoin="round" d="M619 275.5L629.5 269.6L650 264.5L668 259.4L682.6 256L695 254.7L711 258.4L733.7 261.5L764.4 265.5L784.8 270.7L797 275.5L880 320L940 420L945 520L920 610L884 666L861 678.5L838 692.4L819.4 706.3L803 723.7L789 741L777.7 751.5L759 765.4L740.6 779.3L710.5 789.7L675.8 799L652.6 807L629.5 812.4L583 814.7L560 813.8L534.5 808.7L517.6 804.5L500.8 798.7L484 793.6L470.6 788.6L465.5 782.7L460.5 776L455.5 767.5L448.7 755.8L440 749L437 739L432 729L423.5 725.5L417 721L416 716L418.5 710L421 705.7L445 705L448 698.7L446 690L440 687L425 682.7L413.4 674.3L410 666L385 600L395 480L470 360Z"/>
<path filter="url(#nz)" fill="#9ab890" d="M619 275.5L629.5 269.6L650 264.5L668 259.4L682.6 256L695 254.7L711 258.4L733.7 261.5L764.4 265.5L784.8 270.7L797 275.5L880 320L940 420L945 520L920 610L884 666L861 678.5L838 692.4L819.4 706.3L803 723.7L789 741L777.7 751.5L759 765.4L740.6 779.3L710.5 789.7L675.8 799L652.6 807L629.5 812.4L583 814.7L560 813.8L534.5 808.7L517.6 804.5L500.8 798.7L484 793.6L470.6 788.6L465.5 782.7L460.5 776L455.5 767.5L448.7 755.8L440 749L437 739L432 729L423.5 725.5L417 721L416 716L418.5 710L421 705.7L445 705L448 698.7L446 690L440 687L425 682.7L413.4 674.3L410 666L385 600L395 480L470 360Z"/>
<ellipse cx="476" cy="785" rx="8" ry="5" fill="#d8d070" transform="rotate(32 476 785)"/><ellipse cx="476" cy="785" rx="5.500" ry="3" fill="#d87c5c" transform="rotate(32 476 785)"/>
</svg>
<div style="left:372px;top:829px;width:139px;height:2px;background:#ececec;"></div>
<span class="t" style="left:372px;top:834px;width:139px;text-align:center;color:#e4e4e4;font-size:10px;font-family:'DejaVu Sans',sans-serif;transform:scaleX(1.15);">870.40 um</span>
<svg style="left:1031px;top:214px" width="69" height="643" viewBox="1031 214 69 643"><rect x="1036" y="215" width="18" height="10" fill="#6a6a6a"/><rect x="1036" y="225" width="18" height="2" fill="#f4f4f4"/><rect x="1054" y="224.500" width="2" height="612" fill="#626262"/><rect x="1036" y="227.00" width="18" height="20.87" fill="#cc8674"/><rect x="1036" y="247.56" width="18" height="20.87" fill="#d09575"/><rect x="1036" y="268.13" width="18" height="20.87" fill="#c99a70"/><rect x="1036" y="288.69" width="18" height="20.87" fill="#cea874"/><rect x="1036" y="309.26" width="18" height="20.87" fill="#d3b678"/><rect x="1036" y="329.82" width="18" height="20.87" fill="#d8c47c"/><rect x="1036" y="350.39" width="18" height="20.87" fill="#cfc67f"/><rect x="1036" y="370.96" width="18" height="20.87" fill="#c6c882"/><rect x="1036" y="391.52" width="18" height="20.87" fill="#bdca85"/><rect x="1036" y="412.09" width="18" height="20.87" fill="#b4cc88"/><rect x="1036" y="432.65" width="18" height="20.87" fill="#aac98f"/><rect x="1036" y="453.22" width="18" height="20.87" fill="#a0c696"/><rect x="1036" y="473.78" width="18" height="20.87" fill="#96c39d"/><rect x="1036" y="494.35" width="18" height="20.87" fill="#8cc0a4"/><rect x="1036" y="514.91" width="18" height="20.87" fill="#8bbaab"/><rect x="1036" y="535.48" width="18" height="20.87" fill="#8ab4b2"/><rect x="1036" y="556.04" width="18" height="20.87" fill="#89aeb9"/><rect x="1036" y="576.61" width="18" height="20.87" fill="#88a8c0"/><rect x="1036" y="597.17" width="18" height="20.87" fill="#8498b8"/><rect x="1036" y="617.74" width="18" height="20.87" fill="#8088b0"/><rect x="1036" y="638.30" width="18" height="20.87" fill="#7c78a8"/><rect x="1036" y="658.87" width="18" height="20.87" fill="#7e70a4"/><rect x="1036" y="679.43" width="18" height="20.87" fill="#8478a8"/><rect x="1036" y="700.00" width="18" height="20.87" fill="#8c82ae"/><rect x="1036" y="720.56" width="18" height="20.87" fill="#9690b8"/><rect x="1036" y="741.12" width="18" height="20.87" fill="#a09ec2"/><rect x="1036" y="761.69" width="18" height="20.87" fill="#b0b0cc"/><rect x="1036" y="782.25" width="18" height="20.87" fill="#c6c6d8"/><rect x="1036" y="802.82" width="18" height="20.87" fill="#d8d8e2"/><rect x="1036" y="247" width="18" height="1" fill="#fff" fill-opacity="0.28"/><rect x="1036" y="288" width="18" height="1" fill="#fff" fill-opacity="0.28"/><rect x="1036" y="329" width="18" height="1" fill="#fff" fill-opacity="0.28"/><rect x="1036" y="370" width="18" height="1" fill="#fff" fill-opacity="0.28"/><rect x="1036" y="411" width="18" height="1" fill="#fff" fill-opacity="0.28"/><rect x="1036" y="452" width="18" height="1" fill="#fff" fill-opacity="0.28"/><rect x="1036" y="493" width="18" height="1" fill="#fff" fill-opacity="0.28"/><rect x="1036" y="534" width="18" height="1" fill="#fff" fill-opacity="0.28"/><rect x="1036" y="575" width="18" height="1" fill="#fff" fill-opacity="0.28"/><rect x="1036" y="616" width="18" height="1" fill="#fff" fill-opacity="0.28"/><rect x="1036" y="657" width="18" height="1" fill="#fff" fill-opacity="0.28"/><rect x="1036" y="679" width="18" height="1" fill="#fff" fill-opacity="0.28"/><rect x="1036" y="720.5" width="18" height="1" fill="#fff" fill-opacity="0.28"/><rect x="1056" y="672" width="4" height="2" fill="#626262"/><text x="1065" y="678.2" font-family="Liberation Sans,sans-serif" font-size="10" font-style="italic" fill="#9c9c9c">1.5</text><rect x="1056" y="749.3" width="4" height="2" fill="#626262"/><text x="1065" y="754.3" font-family="Liberation Sans,sans-serif" font-size="10" font-style="italic" fill="#9c9c9c">0.75</text><rect x="1056" y="826" width="4" height="2" fill="#626262"/><text x="1065" y="829.5" font-family="Liberation Sans,sans-serif" font-size="10" font-style="italic" fill="#9c9c9c">0</text></svg>
<div style="left:337px;top:857px;width:764px;height:23px;background:#e4e4e6;border:1px solid #d4d4dc;border-top:none;"></div>
<span class="t" style="left:341px;top:861px;color:#6c6c6c;letter-spacing:-0.157px;">Render in Layer Pixels Composition Mode: 29&nbsp; [84, 140]</span>
<svg style="left:1088px;top:867px" width="10" height="10" viewBox="0 0 10 10"><rect x="7" y="1" width="2" height="2" fill="#b0b0b0"/><rect x="4" y="4" width="2" height="2" fill="#b0b0b0"/><rect x="7" y="4" width="2" height="2" fill="#b0b0b0"/><rect x="1" y="7" width="2" height="2" fill="#b0b0b0"/><rect x="4" y="7" width="2" height="2" fill="#b0b0b0"/><rect x="7" y="7" width="2" height="2" fill="#b0b0b0"/></svg>
<div style="left:1441px;top:168px;width:6px;height:61px;background:#d0d0d9;"></div>
<span class="t" style="left:1422px;top:170px;transform-origin:0 0;transform:rotate(90deg) translate(0,-16px);">Properties</span>
<div style="left:1107px;top:168px;width:309px;height:395px;background:#e3e3e5;border:1px solid #d2d2dc;"></div>
<span class="t" style="left:1112px;top:172px;letter-spacing:-0.275px;">MSI Pixel Properties</span>
<svg style="left:1224px;top:177px" width="135" height="5"><defs><pattern id="gp1224" width="4" height="4" patternUnits="userSpaceOnUse"><rect x="0" y="0" width="1" height="1" fill="#c2c2c6"/><rect x="2" y="2" width="1" height="1" fill="#c2c2c6"/></pattern></defs><rect width="135" height="5" fill="url(#gp1224)"/></svg>
<svg style="left:1365px;top:171px" width="48" height="16" viewBox="0 0 48 16"><path d="M2 6h8l-4 4z" fill="#6e6e6e"/><path d="M21.500 3v6M21 3.500h4M19 9.500h7M22.500 10v4" stroke="#6e6e6e" stroke-width="1" fill="none"/><path d="M24 3v6.500" stroke="#6e6e6e" stroke-width="2"/><path d="M34.500 4.500l9 8M43.500 4.500l-9 8" stroke="#6e6e6e" stroke-width="1.400" fill="none"/></svg>
<svg style="left:1117px;top:190px" width="288" height="192" viewBox="1117 190 288 192"><rect x="1117" y="190" width="288" height="192" fill="#ebebeb"/><rect x="1181" y="205.5" width="208" height="144.0" fill="#e4e4e6"/><path d="M1181.0 205.5V349.5" stroke="#d8d8dc" stroke-width="1" stroke-dasharray="1 1"/><path d="M1201.8 205.5V349.5" stroke="#d8d8dc" stroke-width="1" stroke-dasharray="1 1"/><path d="M1222.6 205.5V349.5" stroke="#d8d8dc" stroke-width="1" stroke-dasharray="1 1"/><path d="M1243.4 205.5V349.5" stroke="#d8d8dc" stroke-width="1" stroke-dasharray="1 1"/><path d="M1264.2 205.5V349.5" stroke="#d8d8dc" stroke-width="1" stroke-dasharray="1 1"/><path d="M1285.0 205.5V349.5" stroke="#d8d8dc" stroke-width="1" stroke-dasharray="1 1"/><path d="M1305.8 205.5V349.5" stroke="#d8d8dc" stroke-width="1" stroke-dasharray="1 1"/><path d="M1326.6 205.5V349.5" stroke="#d8d8dc" stroke-width="1" stroke-dasharray="1 1"/><path d="M1347.4 205.5V349.5" stroke="#d8d8dc" stroke-width="1" stroke-dasharray="1 1"/><path d="M1368.2 205.5V349.5" stroke="#d8d8dc" stroke-width="1" stroke-dasharray="1 1"/><path d="M1389.0 205.5V349.5" stroke="#d8d8dc" stroke-width="1" stroke-dasharray="1 1"/><path d="M1181 205.5H1389" stroke="#d8d8dc" stroke-width="1" stroke-dasharray="1 1"/><path d="M1178 205.5H1181" stroke="#707070" stroke-width="1"/><text x="1174" y="209.5" text-anchor="end" font-family="Liberation Sans,sans-serif" font-size="11" font-weight="bold" fill="#666">6.8</text><path d="M1181 221.5H1389" stroke="#d8d8dc" stroke-width="1" stroke-dasharray="1 1"/><path d="M1178 221.5H1181" stroke="#707070" stroke-width="1"/><text x="1174" y="225.5" text-anchor="end" font-family="Liberation Sans,sans-serif" font-size="11" font-weight="bold" fill="#666">6</text><path d="M1181 237.5H1389" stroke="#d8d8dc" stroke-width="1" stroke-dasharray="1 1"/><path d="M1178 237.5H1181" stroke="#707070" stroke-width="1"/><text x="1174" y="241.5" text-anchor="end" font-family="Liberation Sans,sans-serif" font-size="11" font-weight="bold" fill="#666">5.3</text><path d="M1181 253.5H1389" stroke="#d8d8dc" stroke-width="1" stroke-dasharray="1 1"/><path d="M1178 253.5H1181" stroke="#707070" stroke-width="1"/><text x="1174" y="257.5" text-anchor="end" font-family="Liberation Sans,sans-serif" font-size="11" font-weight="bold" fill="#666">4.5</text><path d="M1181 269.5H1389" stroke="#d8d8dc" stroke-width="1" stroke-dasharray="1 1"/><path d="M1178 269.5H1181" stroke="#707070" stroke-width="1"/><text x="1174" y="273.5" text-anchor="end" font-family="Liberation Sans,sans-serif" font-size="11" font-weight="bold" fill="#666">3.8</text><path d="M1181 285.5H1389" stroke="#d8d8dc" stroke-width="1" stroke-dasharray="1 1"/><path d="M1178 285.5H1181" stroke="#707070" stroke-width="1"/><text x="1174" y="289.5" text-anchor="end" font-family="Liberation Sans,sans-serif" font-size="11" font-weight="bold" fill="#666">3</text><path d="M1181 301.5H1389" stroke="#d8d8dc" stroke-width="1" stroke-dasharray="1 1"/><path d="M1178 301.5H1181" stroke="#707070" stroke-width="1"/><text x="1174" y="305.5" text-anchor="end" font-family="Liberation Sans,sans-serif" font-size="11" font-weight="bold" fill="#666">2.3</text><path d="M1181 317.5H1389" stroke="#d8d8dc" stroke-width="1" stroke-dasharray="1 1"/><path d="M1178 317.5H1181" stroke="#707070" stroke-width="1"/><text x="1174" y="321.5" text-anchor="end" font-family="Liberation Sans,sans-serif" font-size="11" font-weight="bold" fill="#666">1.5</text><path d="M1181 333.5H1389" stroke="#d8d8dc" stroke-width="1" stroke-dasharray="1 1"/><path d="M1178 333.5H1181" stroke="#707070" stroke-width="1"/><text x="1174" y="337.5" text-anchor="end" font-family="Liberation Sans,sans-serif" font-size="11" font-weight="bold" fill="#666">0.75</text><path d="M1181 349.5H1389" stroke="#d8d8dc" stroke-width="1" stroke-dasharray="1 1"/><path d="M1178 349.5H1181" stroke="#707070" stroke-width="1"/><text x="1174" y="353.5" text-anchor="end" font-family="Liberation Sans,sans-serif" font-size="11" font-weight="bold" fill="#666">0</text><path d="M1181.0 334.6 L1201.8 334.6 L1222.6 334.6 L1243.4 334.6 L1264.2 334.6 L1285.0 326.0 L1305.8 326.0 L1326.6 326.0 L1347.4 320.0 L1368.2 311.0 L1389.0 208.3 L1389 349.5 L1181 349.5Z" fill="#c9cfda" fill-opacity="0.9"/><path d="M1181.0 334.6 L1201.8 334.6 L1222.6 334.6 L1243.4 334.6 L1264.2 334.6 L1285.0 326.0 L1305.8 326.0 L1326.6 326.0 L1347.4 320.0 L1368.2 311.0 L1389.0 208.3" fill="none" stroke="#86a8cc" stroke-width="1.600" stroke-dasharray="5 2.500"/><circle cx="1181.0" cy="334.6" r="1.600" fill="#86a8cc"/><circle cx="1201.8" cy="334.6" r="1.600" fill="#86a8cc"/><circle cx="1222.6" cy="334.6" r="1.600" fill="#86a8cc"/><circle cx="1243.4" cy="334.6" r="1.600" fill="#86a8cc"/><circle cx="1264.2" cy="334.6" r="1.600" fill="#86a8cc"/><circle cx="1285.0" cy="326.0" r="1.600" fill="#86a8cc"/><circle cx="1305.8" cy="326.0" r="1.600" fill="#86a8cc"/><circle cx="1326.6" cy="326.0" r="1.600" fill="#86a8cc"/><circle cx="1347.4" cy="320.0" r="1.600" fill="#86a8cc"/><circle cx="1368.2" cy="311.0" r="1.600" fill="#86a8cc"/><circle cx="1389.0" cy="208.3" r="1.600" fill="#86a8cc"/><path d="M1181 204.5V350.5" stroke="#707070" stroke-width="2"/><path d="M1180 349.5H1390" stroke="#8094ac" stroke-width="2"/><text x="1181.0" y="365" text-anchor="middle" font-family="Liberation Sans,sans-serif" font-size="11" font-weight="bold" fill="#666">0</text><text x="1201.8" y="365" text-anchor="middle" font-family="Liberation Sans,sans-serif" font-size="11" font-weight="bold" fill="#666">0.1</text><text x="1222.6" y="365" text-anchor="middle" font-family="Liberation Sans,sans-serif" font-size="11" font-weight="bold" fill="#666">0.2</text><text x="1243.4" y="365" text-anchor="middle" font-family="Liberation Sans,sans-serif" font-size="11" font-weight="bold" fill="#666">0.3</text><text x="1264.2" y="365" text-anchor="middle" font-family="Liberation Sans,sans-serif" font-size="11" font-weight="bold" fill="#666">0.4</text><text x="1285.0" y="365" text-anchor="middle" font-family="Liberation Sans,sans-serif" font-size="11" font-weight="bold" fill="#666">0.5</text><text x="1305.8" y="365" text-anchor="middle" font-family="Liberation Sans,sans-serif" font-size="11" font-weight="bold" fill="#666">0.6</text><text x="1326.6" y="365" text-anchor="middle" font-family="Liberation Sans,sans-serif" font-size="11" font-weight="bold" fill="#666">0.7</text><text x="1347.4" y="365" text-anchor="middle" font-family="Liberation Sans,sans-serif" font-size="11" font-weight="bold" fill="#666">0.8</text><text x="1368.2" y="365" text-anchor="middle" font-family="Liberation Sans,sans-serif" font-size="11" font-weight="bold" fill="#666">0.9</text><text x="1389.0" y="365" text-anchor="middle" font-family="Liberation Sans,sans-serif" font-size="11" font-weight="bold" fill="#666">1.0</text><path d="M1396.500 224.500h7l-3.500-7z" fill="#7ea4cc"/><text x="1284" y="379" text-anchor="middle" font-family="Liberation Sans,sans-serif" font-size="6" fill="#a0a0a0">X</text><text x="1136" y="280" text-anchor="middle" font-family="Liberation Sans,sans-serif" font-size="6" fill="#a0a0a0" transform="rotate(-90 1136 278)">Y</text></svg>
<div style="left:1108px;top:386px;width:307px;height:26px;background:#e3e3e4;"></div>
<div style="left:1110px;top:388px;width:23px;height:21px;background:#cedceb;border:1px solid #b2cde9;"></div>
<svg style="left:1110px;top:387px" width="74" height="24" viewBox="0 0 74 24"><rect x="3.500" y="4.5" width="5.500" height="5.500" rx="0.800" fill="#f6f6f6" stroke="#9cbce0" stroke-width="1"/><path d="M4.700 7.25h3.100M6.250 5.7v3.100" stroke="#3c3c3c" stroke-width="1"/><rect x="3.500" y="13.5" width="5.500" height="5.500" rx="0.800" fill="#f6f6f6" stroke="#9cbce0" stroke-width="1"/><path d="M4.700 16.25h3.100M6.250 14.7v3.100" stroke="#3c3c3c" stroke-width="1"/><path d="M11 6.500h3.500M11 17.500h3.500" stroke="#8c8c8c" stroke-width="1"/><path d="M11 8.5h3.500M16 8.5h3" stroke="#aab0bc" stroke-width="1" stroke-dasharray="1 0.500"/><path d="M11 10.5h3.500M16 10.5h3" stroke="#aab0bc" stroke-width="1" stroke-dasharray="1 0.500"/><path d="M11 12.5h3.500M16 12.5h3" stroke="#aab0bc" stroke-width="1" stroke-dasharray="1 0.500"/><path d="M11 14.5h3.500M16 14.5h3" stroke="#aab0bc" stroke-width="1" stroke-dasharray="1 0.500"/><path d="M11 19.5h3.500M16 19.5h3" stroke="#aab0bc" stroke-width="1" stroke-dasharray="1 0.500"/><text x="25.800" y="10.800" font-family="Liberation Serif,serif" font-size="10.500" font-weight="bold" fill="#6c7ad2">A</text><text x="26.500" y="19.200" font-family="Liberation Serif,serif" font-size="10.500" font-weight="bold" fill="#c8687a">Z</text><path d="M38.500 4v15" stroke="#555" stroke-width="1.300"/><path d="M36.300 15l2.200 4l2.200-4" stroke="#555" stroke-width="1" fill="none"/><path d="M48.500 2v21" stroke="#a2a2a2" stroke-width="1"/><rect x="55.500" y="4.500" width="15" height="14" fill="#dedede" stroke="#c6c6c6" stroke-width="1"/><rect x="56" y="5" width="14" height="1.500" fill="#cecece"/><path d="M57.500 9.500h4v-1.500h6v2M57.500 9.500v7.500h11v-7" stroke="#cacaca" stroke-width="1" fill="none"/><path d="M59 11.500h1M59 14h1M61.500 14h4" stroke="#b4b4b4" stroke-width="1"/></svg>
<div style="left:1108px;top:412px;width:307px;height:92px;background:#e9e9e9;border:1px solid #b8b8bc;overflow:hidden;"></div>
<div style="left:1109px;top:413px;width:21px;height:90px;background:#e4e4e6;"></div>
<div style="left:1130px;top:413px;width:132px;height:17px;background:#e0e0e6;"></div>
<span class="hg" style="left:1133px;top:414px;color:#8e8e8e;">AverageIons</span>
<span class="hg" style="left:1266px;top:414px;color:#8e8e8e;">1</span>
<div style="left:1130px;top:430px;width:268px;height:1px;background:#e2e2e4;"></div>
<span class="hg" style="left:1133px;top:431px;color:#8e8e8e;">MaxIntensity</span>
<span class="hg" style="left:1266px;top:431px;color:#8e8e8e;">7</span>
<div style="left:1130px;top:447px;width:268px;height:1px;background:#e2e2e4;"></div>
<span class="hg" style="left:1133px;top:448px;color:#8e8e8e;">MinIntensity</span>
<span class="hg" style="left:1266px;top:448px;color:#8e8e8e;">1</span>
<div style="left:1130px;top:464px;width:268px;height:1px;background:#e2e2e4;"></div>
<span class="hg" style="left:1133px;top:465px;color:#8e8e8e;">NumOfIons</span>
<span class="hg" style="left:1266px;top:465px;color:#8e8e8e;">2394</span>
<div style="left:1130px;top:481px;width:268px;height:1px;background:#e2e2e4;"></div>
<span class="hg" style="left:1133px;top:482px;color:#8e8e8e;">TopIonMz</span>
<span class="hg" style="left:1266px;top:482px;color:#8e8e8e;">47</span>
<div style="left:1130px;top:498px;width:268px;height:1px;background:#e2e2e4;"></div>
<div style="left:1262px;top:413px;width:1px;height:90px;background:#e2e2e4;"></div>
<div style="left:1398px;top:413px;width:16px;height:90px;background:#e9e9e9;"></div>
<div style="left:1398px;top:454px;width:15px;height:17px;background:#cdcdcd;"></div>
<svg style="left:1401px;top:418px" width="10" height="7" viewBox="0 0 10 7"><path d="M1 5.500L5 1.500L9 5.500" stroke="#8a8a8a" stroke-width="1.700" fill="none"/></svg>
<svg style="left:1401px;top:491px" width="10" height="7" viewBox="0 0 10 7"><path d="M1 1.500L5 5.500L9 1.500" stroke="#8a8a8a" stroke-width="1.700" fill="none"/></svg>
<div style="left:1108px;top:507px;width:307px;height:55px;background:#e3e3e5;border:1px solid #b4b4b8;"></div>
<span class="hb" style="left:1114px;top:509px;letter-spacing:0.652px;">AverageIons</span>
<span class="h" style="left:1114px;top:525px;letter-spacing:-0.058px;">the max intensity value of current pixel MS1 scan data.</span>
<div style="left:1107px;top:569px;width:309px;height:311px;background:#e3e3e5;border:1px solid #d2d2dc;"></div>
<span class="t" style="left:1112px;top:573px;letter-spacing:-0.319px;">MSI Region Sample</span>
<svg style="left:1222px;top:578px" width="137" height="5"><defs><pattern id="gp1222" width="4" height="4" patternUnits="userSpaceOnUse"><rect x="0" y="0" width="1" height="1" fill="#c2c2c6"/><rect x="2" y="2" width="1" height="1" fill="#c2c2c6"/></pattern></defs><rect width="137" height="5" fill="url(#gp1222)"/></svg>
<svg style="left:1365px;top:572px" width="48" height="16" viewBox="0 0 48 16"><path d="M2 6h8l-4 4z" fill="#6e6e6e"/><path d="M21.500 3v6M21 3.500h4M19 9.500h7M22.500 10v4" stroke="#6e6e6e" stroke-width="1" fill="none"/><path d="M24 3v6.500" stroke="#6e6e6e" stroke-width="2"/><path d="M34.500 4.500l9 8M43.500 4.500l-9 8" stroke="#6e6e6e" stroke-width="1.400" fill="none"/></svg>
<svg style="left:1111px;top:594px" width="5" height="18"><defs><pattern id="vg1111" width="4" height="4" patternUnits="userSpaceOnUse"><rect x="0" y="0" width="1" height="1" fill="#c2c2c6"/><rect x="2" y="2" width="1" height="1" fill="#c2c2c6"/></pattern></defs><rect width="5" height="18" fill="url(#vg1111)"/></svg>
<svg style="left:1120px;top:592px" width="190" height="24" viewBox="0 0 190 24"><defs><linearGradient id="rg1" x1="0" y1="0" x2="0" y2="1"><stop offset="0" stop-color="#7cc4ea"/><stop offset="1" stop-color="#5c92d2"/></linearGradient></defs><path d="M18.300 10.500A7 7 0 1 1 14.500 5.700" stroke="url(#rg1)" stroke-width="2.600" fill="none"/><path d="M12.500 2.200l7 1.800l-4.600 5z" fill="#78c0e8"/><path d="M28 4.300h6.500l3 3v8h-9.500z" fill="#94dcec"/><path d="M34 9.600h6l3 3v8h-9z" fill="#94dcec"/><path d="M31 7.500l3 3.500M31 7.500h2M31 7.500v2M40 17.500l-3-3.500M40 17.500h-2M40 17.500v-2" stroke="#e080c8" stroke-width="1" fill="none"/><rect x="51.200" y="5.300" width="14.800" height="14.300" fill="#94dcec"/><rect x="51.500" y="11" width="8.500" height="8.500" rx="1.500" fill="#68a4d8"/><path d="M59 11.500l5.500-5.500" stroke="#5c98d4" stroke-width="1.800"/><path d="M61 5.800h4.200v4.200z" fill="#5c98d4"/><path d="M75 11h5.400l-2.700 3z" fill="#a4a4a4"/><path d="M88.200 5.400L102.400 19" stroke="#dc7684" stroke-width="3.400"/><path d="M102.400 5.400L88.200 19" stroke="#e8848e" stroke-width="3.400"/><path d="M88.200 5.400L95.300 12.200" stroke="#e8848e" stroke-width="3.400"/><path d="M116 7.500h5a5 5 0 0 1 5 5" stroke="#66a4dc" stroke-width="2.200" fill="none"/><path d="M117.500 3.500v8l-5.500-4z" fill="#78c0e8"/><path d="M123 17h-5a5 5 0 0 1 -5-5" stroke="#66a4dc" stroke-width="2.200" fill="none"/><path d="M121.500 13v8l5.500-4z" fill="#78c0e8"/><path d="M133.500 1v23" stroke="#d0d0d6" stroke-width="1"/><rect x="141" y="4" width="17" height="16.600" rx="1" fill="#9a9a9a"/><rect x="144" y="4" width="11" height="6.500" fill="#dcdcde"/><rect x="144" y="4" width="11" height="1.200" fill="#7ca8d8"/><rect x="144" y="13.500" width="11" height="7.100" fill="#c2c2c2"/><rect x="146" y="15" width="2" height="4" fill="#9a9a9a"/><circle cx="173.300" cy="12" r="5.600" fill="#8088aa"/><circle cx="173.300" cy="12" r="6.600" fill="none" stroke="#8088aa" stroke-width="2.600" stroke-dasharray="2.700 2.480"/><circle cx="173.300" cy="12" r="3" fill="#f07484"/><path d="M171.500 10.500l2.500-1.500" stroke="#f4d058" stroke-width="1.500"/></svg>
<div style="left:0;top:618px;width:1398px;height:239px;overflow:hidden;"><div style="left:0;top:-618px;width:1398px;height:952px;"><div style="left:1114px;top:624px;width:49px;height:81px;background:#d27c7a;"></div><span class="h" style="left:1171px;top:624px;letter-spacing:-0.337px;">Sample Group:</span><span class="h" style="left:1171px;top:649px;letter-spacing:-0.215px;">Regions:</span><span class="h" style="left:1171px;top:671px;letter-spacing:0.041px;">Note:</span><div style="left:1252px;top:622px;width:132px;height:21px;background:#ebebeb;border:1px solid #a8a8a8;box-shadow:inset 0 0 0 1px #dcdcdc;"></div><span class="h" style="left:1255px;top:624px;">Cavity</span><div style="left:1252px;top:647px;width:132px;height:21px;background:#e6e6e6;border:1px solid #a8a8a8;box-shadow:inset 0 0 0 1px #dcdcdc;"></div><span class="h" style="left:1256px;top:649px;">1</span><div style="left:1252px;top:672px;width:132px;height:31px;background:#e6e6e6;border:1px solid #a8a8a8;box-shadow:inset 0 0 0 1px #dcdcdc;"></div><svg style="left:1369px;top:679px" width="10" height="7" viewBox="0 0 10 7"><path d="M1 5.500L5 1.500L9 5.500" stroke="#cfcfcf" stroke-width="1.700" fill="none"/></svg><svg style="left:1369px;top:692px" width="10" height="7" viewBox="0 0 10 7"><path d="M1 1.500L5 5.500L9 1.500" stroke="#cfcfcf" stroke-width="1.700" fill="none"/></svg><span class="hb" style="left:1388px;top:623px;color:#5050d8;text-decoration:underline;font-size:11px;">x</span><div style="left:1114px;top:720px;width:49px;height:81px;background:#6ab0d0;"></div><span class="h" style="left:1171px;top:720px;letter-spacing:-0.337px;">Sample Group:</span><span class="h" style="left:1171px;top:745px;letter-spacing:-0.215px;">Regions:</span><span class="h" style="left:1171px;top:767px;letter-spacing:0.041px;">Note:</span><div style="left:1252px;top:718px;width:132px;height:21px;background:#ebebeb;border:1px solid #a8a8a8;box-shadow:inset 0 0 0 1px #dcdcdc;"></div><span class="h" style="left:1255px;top:720px;">Mesentery</span><div style="left:1252px;top:743px;width:132px;height:21px;background:#e6e6e6;border:1px solid #a8a8a8;box-shadow:inset 0 0 0 1px #dcdcdc;"></div><span class="h" style="left:1256px;top:745px;">1</span><div style="left:1252px;top:768px;width:132px;height:31px;background:#e6e6e6;border:1px solid #a8a8a8;box-shadow:inset 0 0 0 1px #dcdcdc;"></div><svg style="left:1369px;top:775px" width="10" height="7" viewBox="0 0 10 7"><path d="M1 5.500L5 1.500L9 5.500" stroke="#cfcfcf" stroke-width="1.700" fill="none"/></svg><svg style="left:1369px;top:788px" width="10" height="7" viewBox="0 0 10 7"><path d="M1 1.500L5 5.500L9 1.500" stroke="#cfcfcf" stroke-width="1.700" fill="none"/></svg><span class="hb" style="left:1388px;top:719px;color:#5050d8;text-decoration:underline;font-size:11px;">x</span><div style="left:1114px;top:816px;width:49px;height:81px;background:#aec89c;"></div><span class="h" style="left:1171px;top:816px;letter-spacing:-0.337px;">Sample Group:</span><span class="h" style="left:1171px;top:841px;letter-spacing:-0.215px;">Regions:</span><span class="h" style="left:1171px;top:863px;letter-spacing:0.041px;">Note:</span><div style="left:1252px;top:814px;width:132px;height:21px;background:#ebebeb;border:1px solid #a8a8a8;box-shadow:inset 0 0 0 1px #dcdcdc;"></div><span class="h" style="left:1255px;top:816px;">GI tract</span><div style="left:1252px;top:839px;width:132px;height:21px;background:#e6e6e6;border:1px solid #a8a8a8;box-shadow:inset 0 0 0 1px #dcdcdc;"></div><span class="h" style="left:1256px;top:841px;">1</span><div style="left:1252px;top:864px;width:132px;height:31px;background:#e6e6e6;border:1px solid #a8a8a8;box-shadow:inset 0 0 0 1px #dcdcdc;"></div><svg style="left:1369px;top:871px" width="10" height="7" viewBox="0 0 10 7"><path d="M1 5.500L5 1.500L9 5.500" stroke="#cfcfcf" stroke-width="1.700" fill="none"/></svg><svg style="left:1369px;top:884px" width="10" height="7" viewBox="0 0 10 7"><path d="M1 1.500L5 5.500L9 1.500" stroke="#cfcfcf" stroke-width="1.700" fill="none"/></svg><span class="hb" style="left:1388px;top:815px;color:#5050d8;text-decoration:underline;font-size:11px;">x</span></div></div>
<div style="left:1399px;top:618px;width:15px;height:239px;background:#e6e6e8;"></div>
<div style="left:1399px;top:635px;width:15px;height:26px;background:#cdcdcd;"></div>
<svg style="left:1402px;top:624px" width="10" height="7" viewBox="0 0 10 7"><path d="M1 5.500L5 1.500L9 5.500" stroke="#8a8a8a" stroke-width="1.700" fill="none"/></svg>
<svg style="left:1402px;top:845px" width="10" height="7" viewBox="0 0 10 7"><path d="M1 1.500L5 5.500L9 1.500" stroke="#8a8a8a" stroke-width="1.700" fill="none"/></svg>
<div style="left:1109px;top:858px;width:306px;height:1px;background:#d8d8dc;"></div>
<span class="t" style="left:1113px;top:861px;color:#6c6c6c;letter-spacing:-0.056px;">Tissue map TissueMorphology.cdf has been imported.</span>
<svg style="left:1402px;top:867px" width="10" height="10" viewBox="0 0 10 10"><rect x="7" y="1" width="2" height="2" fill="#b0b0b0"/><rect x="4" y="4" width="2" height="2" fill="#b0b0b0"/><rect x="7" y="4" width="2" height="2" fill="#b0b0b0"/><rect x="1" y="7" width="2" height="2" fill="#b0b0b0"/><rect x="4" y="7" width="2" height="2" fill="#b0b0b0"/><rect x="7" y="7" width="2" height="2" fill="#b0b0b0"/></svg>
<div style="left:18px;top:911px;width:1429px;height:23px;background:#68a5d2;"></div>
<svg style="left:18px;top:914px" width="18" height="18" viewBox="0 0 18 18"><circle cx="9" cy="9" r="8" fill="#a4d6b4" stroke="#8cc6a4" stroke-width="1"/><path d="M4.500 9.500l3 3l6-7" stroke="#f6fbf8" stroke-width="2" fill="none"/></svg>
<span class="w" style="left:39px;top:916px;letter-spacing:-0.127px;">Rendering Complete!</span>
<svg style="left:157px;top:915px" width="14" height="16" viewBox="0 0 14 16"><rect x="1" y="5" width="9" height="9" rx="1.500" fill="#d86870"/><rect x="3" y="2" width="5" height="7" fill="#e8d468"/><rect x="7" y="7" width="5" height="7" fill="#a488cc"/><path d="M9 2l4 3l-4 1z" fill="#60b468"/><rect x="3" y="9" width="4" height="3" fill="#68a5d2"/></svg>
<span class="w" style="left:175px;top:916px;letter-spacing:-0.168px;">Use m/z Data Toolkits</span>
<svg style="left:293px;top:921px" width="7" height="4" viewBox="0 0 7 4"><path d="M0 0h7l-3.500 4z" fill="#8cb4d8"/></svg>
<svg style="left:304px;top:915px" width="14" height="16" viewBox="0 0 14 16"><circle cx="7" cy="8" r="6" fill="#a4d0e8"/><path d="M8 3q3 1 3 5q0 4-3 5q-1-2 0-4l-1-2z" fill="#7890a8"/></svg>
<span class="w" style="left:322px;top:916px;letter-spacing:-0.509px;">47.84 MB</span>
<svg style="left:374px;top:914px" width="16" height="18" viewBox="0 0 16 18"><rect x="2" y="3" width="12" height="12" fill="#6c6c6c"/><path d="M4 1v2M7 1v2M10 1v2M13 1v2M4 15v2M7 15v2M10 15v2M13 15v2M0 5h2M0 8h2M0 11h2M0 14h2M14 5h2M14 8h2M14 11h2" stroke="#6c6c6c" stroke-width="1"/></svg>
<span class="w" style="left:394px;top:916px;letter-spacing:-0.244px;">Memory: 621.02 MB</span>
<div style="left:503px;top:914px;width:100px;height:17px;background:#dddddd;border:1px solid #c4ccd4;"></div>
<svg style="left:603px;top:914px" width="18" height="18" viewBox="0 0 18 18"><circle cx="9" cy="9" r="8" fill="#a4d6b4" stroke="#8cc6a4" stroke-width="1"/><path d="M4.500 9.500l3 3l6-7" stroke="#f6fbf8" stroke-width="2" fill="none"/></svg>
<span class="w" style="left:623px;top:916px;text-decoration:underline;">0/0</span>
<svg style="left:1434px;top:921px" width="9" height="9" viewBox="0 0 9 9"><rect x="6.5" y="0.5" width="1" height="1" fill="#5a7ea0"/><rect x="7" y="1" width="1.200" height="1.200" fill="#f4f8fc"/><rect x="4.5" y="2.5" width="1" height="1" fill="#5a7ea0"/><rect x="5" y="3" width="1.200" height="1.200" fill="#f4f8fc"/><rect x="6.5" y="2.5" width="1" height="1" fill="#5a7ea0"/><rect x="7" y="3" width="1.200" height="1.200" fill="#f4f8fc"/><rect x="2.5" y="4.5" width="1" height="1" fill="#5a7ea0"/><rect x="3" y="5" width="1.200" height="1.200" fill="#f4f8fc"/><rect x="4.5" y="4.5" width="1" height="1" fill="#5a7ea0"/><rect x="5" y="5" width="1.200" height="1.200" fill="#f4f8fc"/><rect x="6.5" y="4.5" width="1" height="1" fill="#5a7ea0"/><rect x="7" y="5" width="1.200" height="1.200" fill="#f4f8fc"/><rect x="0.5" y="6.5" width="1" height="1" fill="#5a7ea0"/><rect x="1" y="7" width="1.200" height="1.200" fill="#f4f8fc"/><rect x="2.5" y="6.5" width="1" height="1" fill="#5a7ea0"/><rect x="3" y="7" width="1.200" height="1.200" fill="#f4f8fc"/><rect x="4.5" y="6.5" width="1" height="1" fill="#5a7ea0"/><rect x="5" y="7" width="1.200" height="1.200" fill="#f4f8fc"/><rect x="6.5" y="6.5" width="1" height="1" fill="#5a7ea0"/><rect x="7" y="7" width="1.200" height="1.200" fill="#f4f8fc"/></svg>
<div style="left:367px;top:275px;width:730px;height:392px;background:#fff;border:1px solid #3c3c3c;box-shadow:0 0 15px rgba(0,0,0,.27),0 3px 8px rgba(0,0,0,.18);"></div>
<svg style="left:377px;top:283px" width="14" height="14" viewBox="0 0 14 14"><rect x="0.500" y="0.500" width="13" height="13" fill="#fff" stroke="#c4c4c4" stroke-width="1"/><rect x="6.500" y="1.500" width="6" height="6" fill="#fad45c" stroke="#d49c20" stroke-width="1"/><rect x="1.500" y="5.500" width="3" height="4" fill="#e85048" stroke="#a81c1c" stroke-width="1"/><rect x="6" y="9" width="5" height="4" fill="#4c88e8"/><rect x="7" y="10" width="3" height="1" fill="#a4c8f8"/></svg>
<span class="t" style="left:397px;top:283px;color:#000;">Set MS-Imaging Plot Parameters</span>
<svg style="left:1075px;top:285px" width="11" height="11" viewBox="0 0 11 11"><path d="M0.500 0.500l10 10M10.500 0.500l-10 10" stroke="#111" stroke-width="1.100" fill="none"/></svg>
<div style="left:380px;top:324px;width:703px;height:300px;border:1px solid #dcdcdc;"></div>
<div style="left:386px;top:318px;width:106px;height:12px;background:#fff;"></div>
<span class="m" style="left:388px;top:316px;">Export Plot Image</span>
<span class="m" style="left:404px;top:338px;">Image Save File:</span>
<div style="left:404px;top:367px;width:555px;height:21px;background:#fff;border:1px solid #7a7a7a;"></div>
<div style="left:406px;top:370px;width:254px;height:13px;background:#0078d7;"></div>
<span class="m" style="left:406px;top:368px;color:#fff;">C:\Users\Administrator\Desktop\29.0000.png</span>
<div style="left:980px;top:366px;width:73px;height:21px;background:#e1e1e1;border:1px solid #adadad;"></div>
<span class="m" style="left:980px;top:369px;width:73px;text-align:center;letter-spacing:0.5px;font-size:9px;">...</span>
<span class="m" style="left:407px;top:403px;">Size</span>
<div style="left:483px;top:402px;width:120px;height:21px;background:#fff;border:1px solid #ababb4;"></div>
<span class="n" style="left:485px;top:402px;">3300</span>
<div style="left:586px;top:404px;width:15px;height:9px;background:#f0f0f0;border:1px solid #c8c8c8;"></div>
<div style="left:586px;top:413px;width:15px;height:8px;background:#f0f0f0;border:1px solid #c8c8c8;border-top:none;"></div>
<svg style="left:590px;top:407px" width="7" height="12" viewBox="0 0 7 12"><path d="M0 3.500h7l-3.500-3.500z" fill="#222"/><path d="M0 7.500h7l-3.500 3.500z" fill="#222"/></svg>
<span class="m" style="left:620px;top:408px;">x</span>
<div style="left:646px;top:402px;width:120px;height:21px;background:#fff;border:1px solid #ababb4;"></div>
<span class="n" style="left:648px;top:402px;">2000</span>
<div style="left:749px;top:404px;width:15px;height:9px;background:#f0f0f0;border:1px solid #c8c8c8;"></div>
<div style="left:749px;top:413px;width:15px;height:8px;background:#f0f0f0;border:1px solid #c8c8c8;border-top:none;"></div>
<svg style="left:753px;top:407px" width="7" height="12" viewBox="0 0 7 12"><path d="M0 3.500h7l-3.500-3.500z" fill="#222"/><path d="M0 7.500h7l-3.500 3.500z" fill="#222"/></svg>
<div style="left:796px;top:405px;width:13px;height:13px;background:#fff;border:1px solid #333;"></div>
<span class="m" style="left:814px;top:403px;">Keep Aspect Ratio</span>
<span class="m" style="left:407px;top:429px;">PPI:</span>
<div style="left:483px;top:429px;width:120px;height:21px;background:#fff;border:1px solid #ababb4;"></div>
<span class="n" style="left:485px;top:429px;">120</span>
<div style="left:586px;top:431px;width:15px;height:9px;background:#f0f0f0;border:1px solid #c8c8c8;"></div>
<div style="left:586px;top:440px;width:15px;height:8px;background:#f0f0f0;border:1px solid #c8c8c8;border-top:none;"></div>
<svg style="left:590px;top:434px" width="7" height="12" viewBox="0 0 7 12"><path d="M0 3.500h7l-3.500-3.500z" fill="#222"/><path d="M0 7.500h7l-3.500 3.500z" fill="#222"/></svg>
<div style="left:407px;top:472px;width:243px;height:133px;border:1px solid #dcdcdc;"></div>
<div style="left:412px;top:466px;width:190px;height:12px;background:#fff;"></div>
<span class="m" style="left:415px;top:463px;">padding: top right bottom left;</span>
<span class="m" style="left:420px;top:491px;width:79px;text-align:right;">Top:</span>
<div style="left:518px;top:490px;width:85px;height:21px;background:#fff;border:1px solid #ababb4;"></div>
<span class="n" style="left:520px;top:490px;">200</span>
<div style="left:586px;top:492px;width:15px;height:9px;background:#f0f0f0;border:1px solid #c8c8c8;"></div>
<div style="left:586px;top:501px;width:15px;height:8px;background:#f0f0f0;border:1px solid #c8c8c8;border-top:none;"></div>
<svg style="left:590px;top:495px" width="7" height="12" viewBox="0 0 7 12"><path d="M0 3.500h7l-3.500-3.500z" fill="#222"/><path d="M0 7.500h7l-3.500 3.500z" fill="#222"/></svg>
<span class="m" style="left:420px;top:518px;width:79px;text-align:right;">Right:</span>
<div style="left:518px;top:517px;width:85px;height:21px;background:#fff;border:1px solid #ababb4;"></div>
<span class="n" style="left:520px;top:517px;">600</span>
<div style="left:586px;top:519px;width:15px;height:9px;background:#f0f0f0;border:1px solid #c8c8c8;"></div>
<div style="left:586px;top:528px;width:15px;height:8px;background:#f0f0f0;border:1px solid #c8c8c8;border-top:none;"></div>
<svg style="left:590px;top:522px" width="7" height="12" viewBox="0 0 7 12"><path d="M0 3.500h7l-3.500-3.500z" fill="#222"/><path d="M0 7.500h7l-3.500 3.500z" fill="#222"/></svg>
<span class="m" style="left:420px;top:545px;width:79px;text-align:right;">Bottom:</span>
<div style="left:518px;top:544px;width:85px;height:21px;background:#fff;border:1px solid #ababb4;"></div>
<span class="n" style="left:520px;top:544px;">250</span>
<div style="left:586px;top:546px;width:15px;height:9px;background:#f0f0f0;border:1px solid #c8c8c8;"></div>
<div style="left:586px;top:555px;width:15px;height:8px;background:#f0f0f0;border:1px solid #c8c8c8;border-top:none;"></div>
<svg style="left:590px;top:549px" width="7" height="12" viewBox="0 0 7 12"><path d="M0 3.500h7l-3.500-3.500z" fill="#222"/><path d="M0 7.500h7l-3.500 3.500z" fill="#222"/></svg>
<span class="m" style="left:420px;top:572px;width:79px;text-align:right;">Left:</span>
<div style="left:518px;top:571px;width:85px;height:21px;background:#fff;border:1px solid #ababb4;"></div>
<span class="n" style="left:520px;top:571px;">300</span>
<div style="left:586px;top:573px;width:15px;height:9px;background:#f0f0f0;border:1px solid #c8c8c8;"></div>
<div style="left:586px;top:582px;width:15px;height:8px;background:#f0f0f0;border:1px solid #c8c8c8;border-top:none;"></div>
<svg style="left:590px;top:576px" width="7" height="12" viewBox="0 0 7 12"><path d="M0 3.500h7l-3.500-3.500z" fill="#222"/><path d="M0 7.500h7l-3.500 3.500z" fill="#222"/></svg>
<div style="left:878px;top:632px;width:73px;height:21px;background:#e1e1e1;border:1px solid #adadad;"></div>
<span class="m" style="left:878px;top:634px;width:73px;text-align:center;">Cancel</span>
<div style="left:982px;top:632px;width:73px;height:21px;background:#e1e1e1;border:1px solid #adadad;"></div>
<span class="m" style="left:982px;top:634px;width:73px;text-align:center;">OK</span>
</body></html>
